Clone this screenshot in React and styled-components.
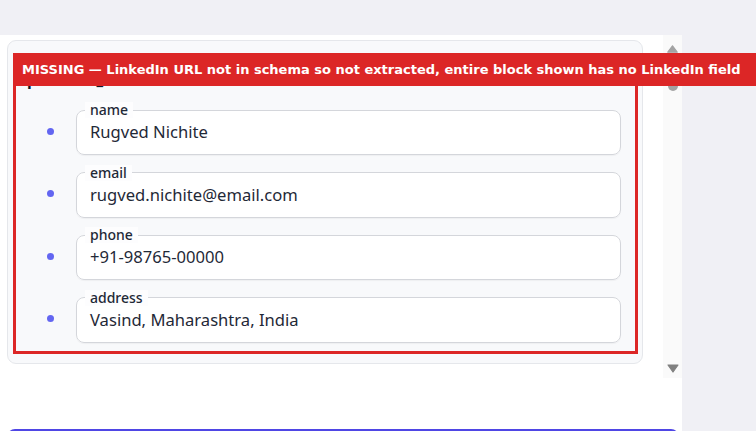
import React from "react";
import styled, { createGlobalStyle } from "styled-components";

const GlobalStyle = createGlobalStyle`
  html, body {
    margin: 0;
    padding: 0;
    background: #f0f0f5;
    overflow: hidden;
    font-family: "Noto Sans", "Liberation Sans", sans-serif;
  }
`;

const Page = styled.div`
  padding-top: 35px;
  width: 756px;
  height: 431px;
  box-sizing: border-box;
`;

const Panel = styled.div`
  width: 682px;
  height: 396px;
  background: #ffffff;
  display: flex;
  flex-direction: column;
`;

const ScrollArea = styled.div`
  display: flex;
  flex: none;
  height: 343px;
`;

const Content = styled.div`
  flex: 1;
  padding: 5px 20px 0 7px;
  position: relative;
  z-index: 2;
`;

const Card = styled.div`
  border: 1px solid #e5e7eb;
  border-radius: 9px;
  background: #f8f9fb;
  padding: 12px 4px 9px 5px;
`;

const Flagged = styled.section`
  position: relative;
  border: 3px solid #dc2626;
  padding: 11px 14px 8px 11px;
`;

const Banner = styled.div`
  position: absolute;
  top: -3px;
  left: -1px;
  height: 33px;
  display: flex;
  align-items: center;
  padding: 0 20px 0 7px;
  background: #dc2626;
  color: #ffffff;
  font-family: "DejaVu Sans", "Liberation Sans", sans-serif;
  font-weight: 700;
  font-size: 13px;
  white-space: nowrap;
  z-index: 3;
`;

const Heading = styled.h3`
  margin: 0 0 11px 0;
  font-size: 16px;
  line-height: 24px;
  font-weight: 700;
  color: #111827;
`;

const Rows = styled.div`
  display: flex;
  flex-direction: column;
  gap: 9.5px;
  padding-left: 20px;
`;

const Row = styled.div`
  display: flex;
  align-items: center;
  gap: 22px;
`;

const Dot = styled.span`
  width: 7px;
  height: 7px;
  border-radius: 50%;
  background: #6366f1;
  flex: none;
  margin-top: 5px;
`;

const Field = styled.fieldset`
  flex: 1;
  margin: 0;
  min-width: 0;
  border: 1px solid #d4d6db;
  border-radius: 8px;
  background: #ffffff;
  padding: 2px 13px 10px 13px;
  box-shadow: 0 1px 1px rgba(0, 0, 0, 0.04);
`;

const Legend = styled.legend`
  margin-left: -5px;
  padding: 0 5px;
  font-size: 14px;
  line-height: 16px;
  font-weight: 500;
  color: #1f2937;
  background: #fdfdfe;
`;

const Value = styled.div`
  font-size: 16.6px;
  line-height: 24px;
  color: #1f2937;
`;

const ScrollBar = styled.div`
  width: 19px;
  background: #fafafa;
  display: flex;
  flex-direction: column;
  align-items: center;
  padding: 10px 0 5px 0;
  box-sizing: border-box;
`;

const Thumb = styled.div`
  width: 10px;
  height: 36px;
  margin-top: 2px;
  border-radius: 5px;
  background: #a3a3a3;
`;

const Spacer = styled.div`
  flex: 1;
`;

const Footer = styled.div`
  flex: 1;
  min-height: 0;
  overflow: hidden;
  padding: 51px 3px 0 7px;
`;

const PrimaryButton = styled.button`
  display: block;
  width: 100%;
  height: 44px;
  border: none;
  border-radius: 8px;
  background: #4f46e5;
`;

const fields = [
  { label: "name", value: "Rugved Nichite" },
  { label: "email", value: "rugved.nichite@email.com" },
  { label: "phone", value: "+91-98765-00000" },
  { label: "address", value: "Vasind, Maharashtra, India" },
];

const UpArrow = () => (
  <svg width="11" height="8" viewBox="0 0 11 8">
    <path d="M5.5 0.8 L10.2 7.2 L0.8 7.2 Z" fill="#a3a3a3" stroke="#a3a3a3" strokeLinejoin="round" strokeWidth="1.2" />
  </svg>
);

const DownArrow = () => (
  <svg width="12" height="9" viewBox="0 0 12 9">
    <path d="M1 1 L11 1 L6 8 Z" fill="#808080" stroke="#808080" strokeLinejoin="round" strokeWidth="1.2" />
  </svg>
);

export default function App() {
  return (
    <>
      <GlobalStyle />
      <Page>
        <Panel>
          <ScrollArea>
            <Content>
              <Card>
                <Flagged>
                  <Banner>
                    MISSING — LinkedIn URL not in schema so not extracted, entire block shown has no LinkedIn field
                  </Banner>
                  <Heading>personal_info</Heading>
                  <Rows>
                    {fields.map((f) => (
                      <Row key={f.label}>
                        <Dot />
                        <Field>
                          <Legend>{f.label}</Legend>
                          <Value>{f.value}</Value>
                        </Field>
                      </Row>
                    ))}
                  </Rows>
                </Flagged>
              </Card>
            </Content>
            <ScrollBar>
              <UpArrow />
              <Thumb />
              <Spacer />
              <DownArrow />
            </ScrollBar>
          </ScrollArea>
          <Footer>
            <PrimaryButton aria-label="Save" />
          </Footer>
        </Panel>
      </Page>
    </>
  );
}
